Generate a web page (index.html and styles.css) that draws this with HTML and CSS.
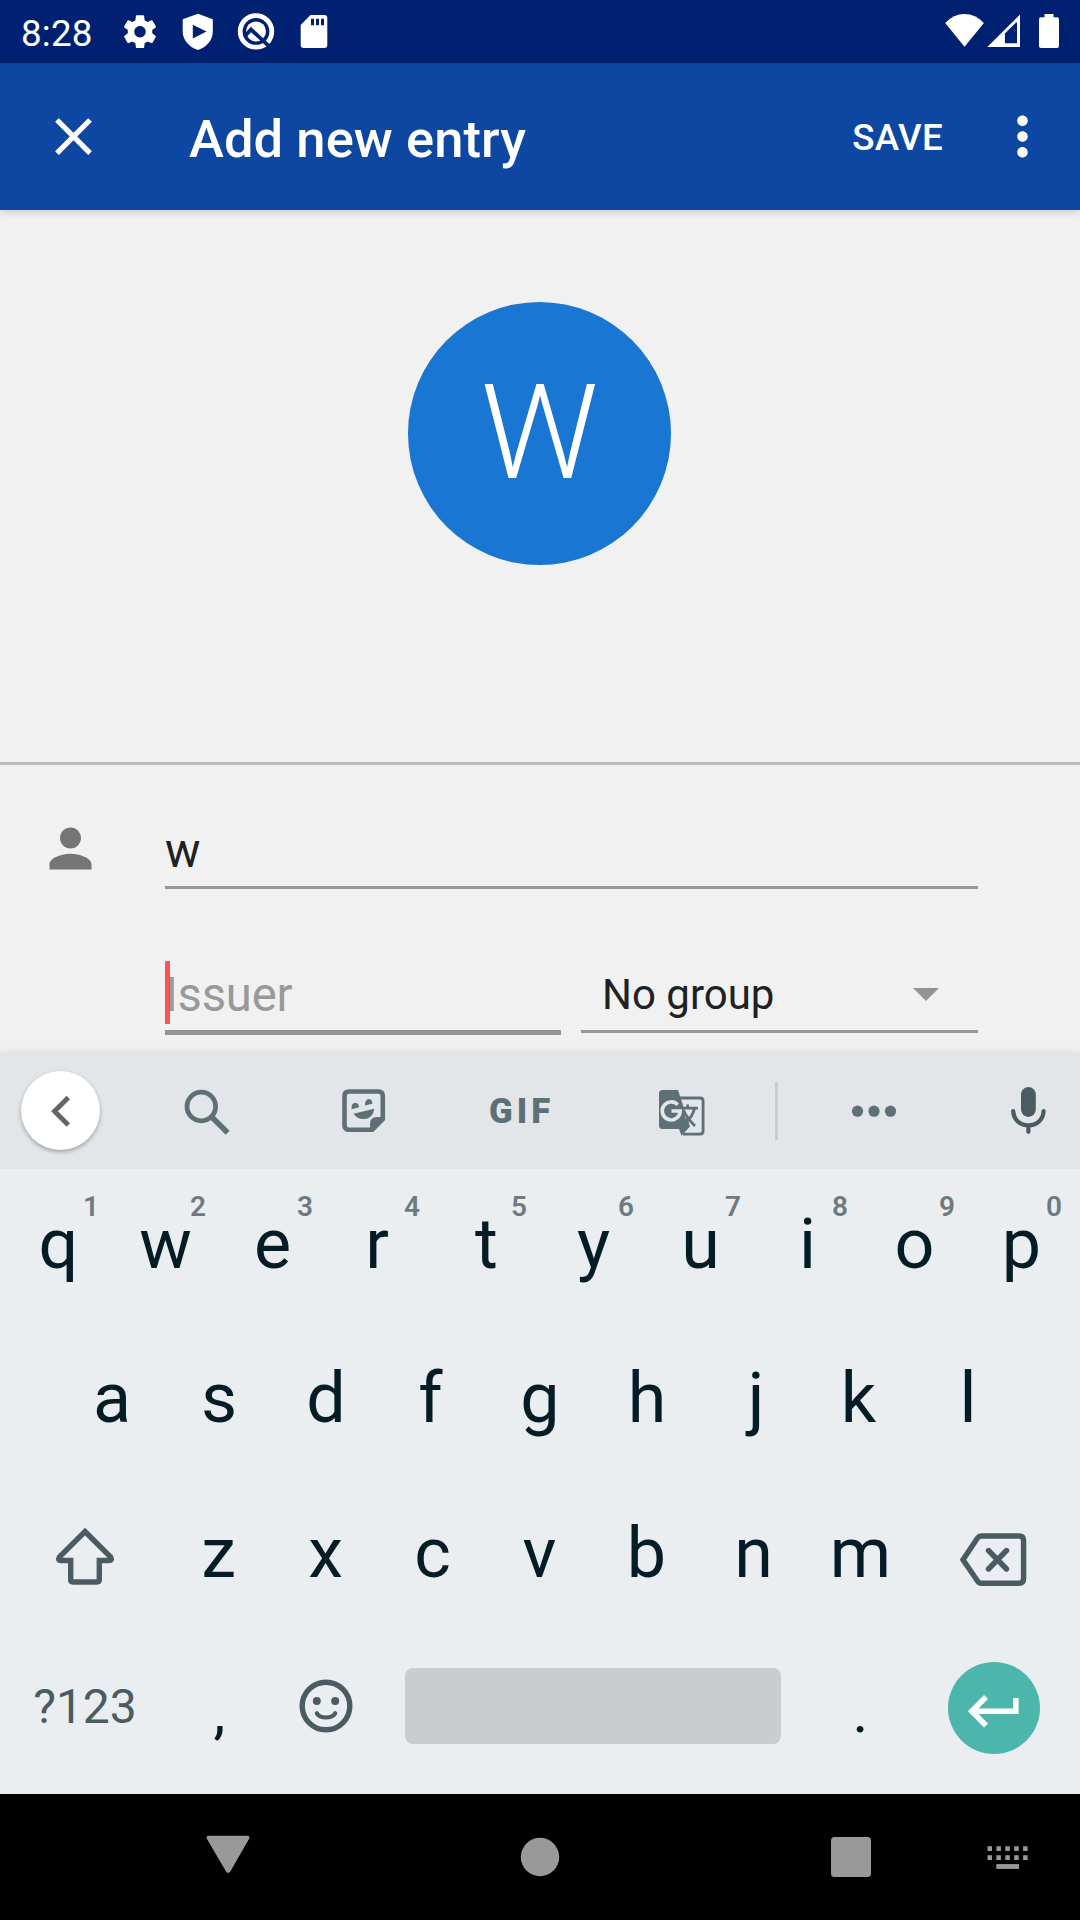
FILE: index.html
```html
<!DOCTYPE html>
<html lang="en">
<head>
<meta charset="utf-8">
<title>Add new entry</title>
<link rel="stylesheet" href="styles.css">
</head>
<body>
<div class="screen">
  <header class="status">
    <span class="clock">8:28</span>
    <div class="notifications">
      <svg width="40" height="63" viewBox="120 0 40 63"><path transform="translate(120.4 12.1) scale(1.635)" fill="#fff" d="M19.43 12.98c.04-.32.07-.64.07-.98s-.03-.66-.07-.98l2.11-1.65c.19-.15.24-.42.12-.64l-2-3.46c-.12-.22-.39-.3-.61-.22l-2.49 1c-.52-.4-1.08-.73-1.69-.98l-.38-2.65C14.46 2.18 14.25 2 14 2h-4c-.25 0-.46.18-.49.42l-.38 2.65c-.61.25-1.17.59-1.69.98l-2.49-1c-.23-.09-.49 0-.61.22l-2 3.46c-.13.22-.07.49.12.64l2.11 1.65c-.04.32-.07.65-.07.98s.03.66.07.98l-2.11 1.65c-.19.15-.24.42-.12.64l2 3.46c.12.22.39.3.61.22l2.49-1c.52.4 1.08.73 1.69.98l.38 2.65c.03.24.24.42.49.42h4c.25 0 .46-.18.49-.42l.38-2.65c.61-.25 1.17-.59 1.69-.98l2.49 1c.23.09.49 0 .61-.22l2-3.46c.12-.22.07-.49-.12-.64l-2.11-1.65zM12 15.5c-1.93 0-3.5-1.57-3.5-3.5s1.57-3.5 3.5-3.5 3.5 1.57 3.5 3.5-1.57 3.5-3.5 3.5z"/></svg>
      <svg width="40" height="63" viewBox="178 0 40 63"><path fill="#fff" fill-rule="evenodd" d="M198 13.7 212.8 19.3V31.5C212.8 40 206.5 47.5 198 50C189.5 47.5 182.7 40 182.7 31.5V19.3ZM192.8 24.7V38.6L206.5 31.6Z"/></svg>
      <svg width="40" height="63" viewBox="236 0 40 63"><circle cx="256" cy="31.4" r="15.8" fill="none" stroke="#fff" stroke-width="4.8"/><circle cx="256" cy="31.4" r="10" fill="#fff"/><path d="M244.5 36.5 251 29.5 271.500 48.500" fill="none" stroke="#002171" stroke-width="3.8"/></svg>
      <svg width="40" height="63" viewBox="294 0 40 63"><path fill="#fff" fill-rule="evenodd" d="M310.500 15H324.500Q327.300 15 327.300 18V45Q327.300 48 324.500 48H303.600Q300.700 48 300.700 45V25ZM311 18.700V25.300H314V18.700ZM316 18.700V25.300H319V18.700ZM321 18.700V25.300H324V18.700Z"/></svg>
    </div>
    <div class="system">
      <svg width="42" height="63" viewBox="944 0 42 63"><path fill="#fff" d="M964.500 46.700 945.200 23Q953.500 14 964.500 14T983.900 23Z"/></svg>
      <svg width="36" height="63" viewBox="986 0 36 63"><path fill="#fff" fill-rule="evenodd" d="M1020 14.500V47H987.300ZM1017 22.500H1016L1004.900 33.500V43.200H1017Z"/></svg>
      <svg class="battery" width="22" height="63" viewBox="1038 0 22 63"><path fill="#fff" d="M1044.500 14H1053.500V17.300H1057Q1059 17.300 1059 19.500V46Q1059 48 1057 48H1041Q1039 48 1039 46V19.500Q1039 17.300 1041 17.300H1044.500Z"/></svg>
    </div>
  </header>

  <div class="appbar">
    <svg width="63" height="63" viewBox="0 0 24 24"><path fill="#fff" d="M19 6.410 17.590 5 12 10.590 6.410 5 5 6.410 10.590 12 5 17.590 6.410 19 12 13.410 17.590 19 19 17.590 13.410 12z"/></svg>
    <h1 class="title">Add new entry</h1>
    <span class="save">SAVE</span>
    <svg width="63" height="63" viewBox="0 0 24 24"><path fill="#fff" d="M12 8c1.100 0 2-.9 2-2s-.9-2-2-2-2 .9-2 2 .9 2 2 2zm0 2c-1.100 0-2 .9-2 2s.9 2 2 2 2-.9 2-2-.9-2-2-2zm0 6c-1.100 0-2 .9-2 2s.9 2 2 2 2-.9 2-2-.9-2-2-2z"/></svg>
  </div>

  <section class="hero"><div class="avatar">W</div></section>

  <section class="form">
    <svg class="person" width="63" height="63" viewBox="0 0 24 24"><path fill="#757575" d="M12 12c2.210 0 4-1.790 4-4s-1.790-4-4-4-4 1.790-4 4 1.790 4 4 4zm0 2c-2.670 0-8 1.340-8 4v2h16v-2c0-2.660-5.330-4-8-4z"/></svg>
    <div class="fields">
      <div class="field name">w</div>
      <div class="pair">
        <div class="field issuer">Issuer<i class="caret"></i></div>
        <div class="field group"><span>No group</span><svg width="26" height="13" viewBox="0 0 26 13"><path fill="#949494" d="M0 0H26L13 13Z"/></svg></div>
      </div>
    </div>
  </section>

  <section class="keyboard">
    <div class="strip">
      <div class="back"><svg width="20" height="32" viewBox="51 1094 20 32"><path d="M68.300 1096.500 54.500 1110.200 68.300 1124" fill="none" stroke="#686464" stroke-width="4.800"/></svg></div>
      <svg class="search" width="48" height="48" viewBox="183 1088 48 48"><g fill="none" stroke="#5f6f76"><circle cx="201.300" cy="1106.500" r="14.300" stroke-width="4.800"/><path d="M211.500 1116.800 227.700 1132.700" stroke-width="5.600"/></g></svg>
      <svg class="sticker" width="46" height="46" viewBox="340 1088 46 46"><path d="M372.300 1129.700H349Q344.500 1129.700 344.500 1125.200V1096Q344.500 1091.500 349 1091.500H378.300Q382.800 1091.500 382.800 1096V1119Z" fill="none" stroke="#5f6f76" stroke-width="4.600"/><path fill="#5f6f76" d="M370 1131V1124Q370 1117 377 1117H384V1120L373 1131ZM353.500 1113.800 374.300 1108.700Q373 1119 363.500 1119Q357 1119 353.500 1113.800ZM351.500 1109.300Q351 1102.700 355.300 1102.700Q359 1103 359 1107.300ZM365 1105.500Q365 1099 369 1099Q372.500 1099.500 372.300 1103.800Z"/></svg>
      <span class="gif">GIF</span>
      <svg class="translate" width="48" height="48" viewBox="658 1089 48 48"><path d="M680 1098H700Q703.100 1098 703.100 1101V1131Q703.100 1134.100 700 1134.100H683" fill="none" stroke="#5f6f76" stroke-width="2.800"/><path fill="#5f6f76" d="M662.500 1090H678L690 1126.500 681.500 1135.800 679 1129H662.500Q659 1129 659 1125.500V1093.500Q659 1090 662.500 1090Z"/><path fill="#e2e6e9" d="M682.500 1109.500H688L686 1119Z"/><path d="M677.700 1104.700A9 9 0 1 0 680.200 1111H671.500" fill="none" stroke="#e2e6e9" stroke-width="3.600"/><path d="M682 1108.200H698M687.600 1104.500V1108M694.500 1108.500Q692.500 1116.500 686 1122.500M683.500 1110Q687 1118.500 695 1126" fill="none" stroke="#5f6f76" stroke-width="2.800"/></svg>
      <div class="rule"></div>
      <svg class="more" width="46" height="14" viewBox="851 1104 46 14"><g fill="#5f6f76"><circle cx="857.500" cy="1111.200" r="5.600"/><circle cx="874" cy="1111.200" r="5.600"/><circle cx="890.500" cy="1111.200" r="5.600"/></g></svg>
      <svg class="mic" width="38" height="48" viewBox="1009 1087 38 48"><rect x="1021" y="1087" width="14.800" height="30" rx="7.400" fill="#4b5b62"/><path d="M1013.200 1111.200C1014 1130 1042.800 1130 1043.600 1111.200M1028.400 1125.500V1131.800" fill="none" stroke="#4b5b62" stroke-width="4.200" stroke-linecap="round"/></svg>
    </div>
    <div class="row">
      <span class="key">q<sup>1</sup></span><span class="key">w<sup>2</sup></span><span class="key">e<sup>3</sup></span><span class="key lean-left">r<sup>4</sup></span><span class="key">t<sup>5</sup></span><span class="key">y<sup>6</sup></span><span class="key">u<sup>7</sup></span><span class="key">i<sup>8</sup></span><span class="key">o<sup>9</sup></span><span class="key">p<sup>0</sup></span>
    </div>
    <div class="row middle">
      <span class="key">a</span><span class="key">s</span><span class="key">d</span><span class="key lean-left">f</span><span class="key">g</span><span class="key">h</span><span class="key lean-right">j</span><span class="key lean-left">k</span><span class="key">l</span>
    </div>
    <div class="row lower">
      <span class="key wide shift"><svg width="62" height="60" viewBox="54 1525 62 60"><path d="M85 1530.500 110.700 1556.200Q112.500 1559.500 109 1559.500H99.300V1578.500Q99.300 1581 96.800 1581H73.200Q70.700 1581 70.700 1578.500V1559.500H61Q57.500 1559.500 59.300 1556.200Z" fill="none" stroke="#4b5b62" stroke-width="5.400"/></svg></span>
      <span class="key">z</span><span class="key">x</span><span class="key">c</span><span class="key">v</span><span class="key">b</span><span class="key">n</span><span class="key">m</span>
      <span class="key wide backspace"><svg width="70" height="56" viewBox="958 1530 70 56"><path d="M981 1535H1019Q1023.600 1535 1023.600 1539.500V1577.500Q1023.600 1582.200 1019 1582.200H981Q979 1582.200 977.500 1580L963 1558.700 977.500 1537Q979 1535 981 1535ZM988.500 1549.500 1006.500 1568M1006.500 1549.500 988.500 1568" fill="none" stroke="#4b5b62" stroke-width="5.400" stroke-linecap="round"/></svg></span>
    </div>
    <div class="row bottom">
      <span class="key wide symbols">?123</span>
      <span class="key punct comma">,</span>
      <span class="key"><svg width="54" height="54" viewBox="0 0 54 54"><g fill="none" stroke="#4b5b62"><circle cx="27" cy="27" r="23.800" stroke-width="5.400"/><path d="M17.800 34.300Q20.500 38.500 27 38.500T36.200 34.300" stroke-width="4.200" stroke-linecap="round"/></g><circle cx="17.800" cy="22" r="4" fill="#4b5b62"/><circle cx="36.200" cy="22" r="4" fill="#4b5b62"/></svg></span>
      <span class="space"></span>
      <span class="key punct">.</span>
      <span class="enter"><svg width="92" height="92" viewBox="948 1662 92 92"><path d="M1015.800 1698V1711.200H972M986 1697 971.800 1711.200 986 1725.500" fill="none" stroke="#fff" stroke-width="5.600"/></svg></span>
    </div>
  </section>

  <nav class="navbar">
    <svg width="44" height="126" viewBox="206 1794 44 126"><path fill="#999" d="M208.500 1835.700H247.500Q250.300 1836 249 1839L230.300 1871.500Q228.200 1874.300 226 1871.500L207 1839Q205.700 1836 208.500 1835.700Z"/></svg>
    <svg width="40" height="126" viewBox="520 1794 40 126"><circle cx="540" cy="1857" r="19.200" fill="#999"/></svg>
    <svg width="40" height="126" viewBox="831 1794 40 126"><rect x="831" y="1837" width="40" height="40" rx="3.500" fill="#999"/></svg>
    <svg width="42" height="126" viewBox="987 1794 42 126"><path d="M987.500 1848.700H1028M987.500 1857.700H1028" stroke="#999" stroke-width="4.800" stroke-dasharray="4.500 4.400"/><path d="M996.300 1866.500H1019" stroke="#999" stroke-width="4.800"/></svg>
  </nav>
</div>
</body>
</html>
```
FILE: styles.css
```css
* { box-sizing: border-box; }
body { margin: 0; font-family: Roboto, "Liberation Sans", sans-serif; }
svg { display: block; flex: none; }

.screen {
  width: 1080px;
  height: 1920px;
  display: flex;
  flex-direction: column;
  overflow: hidden;
  background: #f1f1f1;
}

.status {
  height: 63px;
  flex: none;
  display: flex;
  align-items: center;
  padding: 0 20px 0 21px;
  background: #002171;
  color: #fff;
}
.clock { width: 99px; padding-top: 3px; font-size: 36.75px; letter-spacing: .2px; }
.notifications { display: flex; gap: 18px; }
.system { display: flex; margin-left: auto; }
.battery { margin-left: 16px; }

.appbar {
  height: 147px;
  flex: none;
  display: flex;
  align-items: center;
  padding: 0 26px 0 42px;
  background: #0d47a1;
  color: #fff;
  box-shadow: 0 1px 9px rgba(0, 0, 0, .2);
}
.title { margin: 0 auto 0 84px; padding-top: 4px; font-size: 52.5px; font-weight: 500; letter-spacing: .08px; }
.save { margin-right: 48px; padding-top: 2px; font-size: 36.75px; font-weight: 500; letter-spacing: .3px; }

.hero {
  height: 555px;
  flex: none;
  padding-top: 92px;
  border-bottom: 3px solid #bcbcbc;
}
.avatar {
  width: 263px;
  height: 263px;
  margin-left: 408px;
  border-radius: 50%;
  background: #1976d2;
  color: #fff;
  font-size: 131.25px;
  font-weight: 300;
  line-height: 263px;
  text-align: center;
}

.form {
  height: 287px;
  flex: none;
  display: flex;
  padding: 40px 102px 0 39px;
}
.person { margin: 12px 63px 0 0; }
.fields { flex: 1; }
.field {
  height: 84px;
  display: flex;
  align-items: center;
  padding-top: 11px;
  border-bottom: 3px solid #999;
  color: #212121;
  font-size: 47.25px;
  line-height: 56px;
}
.pair { display: flex; align-items: flex-start; gap: 20px; margin-top: 60px; }
.issuer { position: relative; width: 396px; height: 86px; border-bottom-width: 5px; border-color: #949494; color: #999; letter-spacing: -.25px; }
.caret { position: absolute; left: 0; top: 12px; width: 5px; height: 63px; background: rgba(255, 61, 61, .88); }
.group { width: 397px; justify-content: space-between; padding-left: 21px; padding-right: 39px; font-size: 42px; }
.group svg { margin-top: -1px; }

.keyboard {
  height: 742px;
  flex: none;
  background: #eaeef1;
  color: #041c26;
  box-shadow: 0 0 8px rgba(0, 0, 0, .08);
}
.strip { height: 117px; display: flex; align-items: center; padding-left: 21px; background: #e2e6e9; }
.back {
  width: 79px;
  height: 79px;
  display: flex;
  align-items: center;
  justify-content: center;
  border-radius: 50%;
  background: #fff;
  box-shadow: 0 2px 4px rgba(0, 0, 0, .3);
}
.search { margin: 3px 0 0 83px; }
.sticker { margin-left: 109px; }
.gif { width: 67px; margin-left: 103px; color: #5f6f76; font-size: 34.7px; font-weight: 900; letter-spacing: 4px; line-height: 40px; white-space: nowrap; }
.translate { margin: 5px 0 0 102px; }
.rule { width: 3px; height: 58px; margin: 1px 0 0 69px; background: #c9cdd0; }
.more { margin: 1px 0 0 73px; }
.mic { margin-left: 112px; }

.row { height: 150px; display: flex; align-items: center; padding-left: 5px; }
.middle { height: 158px; padding-left: 58.5px; }
.lower { height: 152px; }
.bottom { height: 154px; }
.key {
  position: relative;
  width: 107px;
  height: 100%;
  flex: none;
  display: flex;
  align-items: center;
  justify-content: center;
  font-size: 70px;
}
.key sup {
  position: absolute;
  left: 71px;
  top: 23px;
  width: 30px;
  color: #6d7a80;
  font-size: 28px;
  font-weight: 600;
  line-height: 30px;
  text-align: center;
}
.lean-left { padding-right: 5px; }
.lean-right { padding-left: 4px; }
.wide { width: 160px; }
.shift { padding-top: 5px; }
.backspace { margin-left: -1px; padding-top: 11px; }
.symbols { color: #4b5b62; font-size: 48px; }
.punct { padding-top: 10px; font-size: 60px; }
.comma { padding-left: 2px; }
.space { width: 376px; height: 76px; margin: 0 26px; border-radius: 8px; background: #c9cdd0; }
.enter { width: 92px; height: 92px; margin: 4px 0 0 34px; border-radius: 50%; background: #4db6ac; }

.navbar { height: 126px; flex: none; display: flex; padding-left: 206px; background: #000; }
.navbar svg:nth-child(2) { margin-left: 270px; }
.navbar svg:nth-child(3) { margin-left: 271px; }
.navbar svg:nth-child(4) { margin-left: 116px; }
```
